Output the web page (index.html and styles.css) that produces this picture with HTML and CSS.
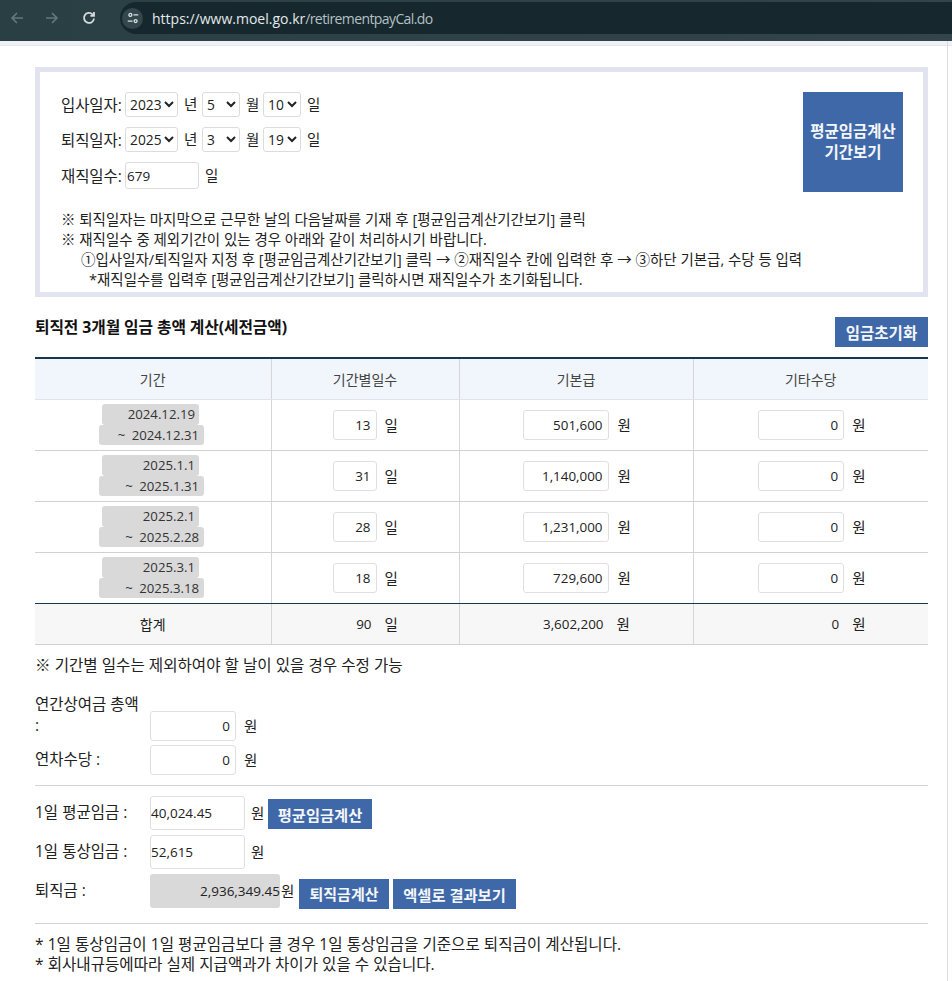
FILE: index.html
```html
<!DOCTYPE html>
<html lang="ko">
<head>
<meta charset="utf-8">
<title>퇴직금 계산</title>
<link rel="stylesheet" href="styles.css">
</head>
<body>
<header class="chrome">
  <svg class="nav dim" viewBox="0 0 16 16"><path d="M14 8H3M8 3 3 8l5 5"/></svg>
  <svg class="nav dim" viewBox="0 0 16 16"><path d="M2 8h11M8 3l5 5-5 5"/></svg>
  <svg class="nav reload" viewBox="0 0 16 16"><path d="M13 8.500A5 5 0 1 1 11.500 4.300L13 5.800M13 2v3.800H9.400"/></svg>
  <div class="omni">
    <span class="tune"><svg viewBox="0 0 16 16"><circle cx="5" cy="4.500" r="1.700"/><path d="M8.500 4.500H14M2 11.500h5.500"/><circle cx="11" cy="11.500" r="1.700"/></svg></span>
    <span class="url"><span class="host">https://www.moel.go.kr</span><span class="path">/retirementpayCal.do</span></span>
  </div>
</header>
<div class="strip"></div>
<main class="page">
  <section class="box">
    <div class="box-top">
      <div class="dates">
        <div class="date-row">
          <label class="date-label">입사일자:</label>
          <select class="sel sel-y"><option>2023</option></select><span class="u">년</span>
          <select class="sel sel-m"><option>5</option></select><span class="u">월</span>
          <select class="sel sel-d"><option>10</option></select><span class="u">일</span>
        </div>
        <div class="date-row">
          <label class="date-label">퇴직일자:</label>
          <select class="sel sel-y"><option>2025</option></select><span class="u">년</span>
          <select class="sel sel-m"><option>3</option></select><span class="u">월</span>
          <select class="sel sel-d"><option>19</option></select><span class="u">일</span>
        </div>
        <div class="date-row days-row">
          <label class="date-label">재직일수:</label>
          <input class="days" value="679"><span class="u u-days">일</span>
        </div>
      </div>
      <button class="btn btn-period">평균임금계산<br>기간보기</button>
    </div>
    <div class="notes">
      <p>※ 퇴직일자는 마지막으로 근무한 날의 다음날짜를 기재 후 [평균임금계산기간보기] 클릭</p>
      <p>※ 재직일수 중 제외기간이 있는 경우 아래와 같이 처리하시기 바랍니다.</p>
      <p class="ind1">①입사일자/퇴직일자 지정 후 [평균임금계산기간보기] 클릭 → ②재직일수 칸에 입력한 후 → ③하단 기본급, 수당 등 입력</p>
      <p class="ind2">*재직일수를 입력후 [평균임금계산기간보기] 클릭하시면 재직일수가 초기화됩니다.</p>
    </div>
  </section>

  <div class="title-row">
    <h2 class="title">퇴직전 3개월 임금 총액 계산(세전금액)</h2>
    <button class="btn btn-reset">임금초기화</button>
  </div>

  <table class="pay">
    <colgroup><col class="c1"><col class="c2"><col class="c3"><col class="c4"></colgroup>
    <thead><tr><th>기간</th><th>기간별일수</th><th>기본급</th><th>기타수당</th></tr></thead>
    <tbody>
      <tr>
        <td><div class="period"><span class="chip c-a">2024.12.19</span><span class="chip c-b">~ 2024.12.31</span></div></td>
        <td><input class="in in-d" value="13"><span class="u2">일</span></td>
        <td><input class="in in-w" value="501,600"><span class="u2">원</span></td>
        <td><input class="in in-w" value="0"><span class="u2">원</span></td>
      </tr>
      <tr>
        <td><div class="period"><span class="chip c-a">2025.1.1</span><span class="chip c-b">~ 2025.1.31</span></div></td>
        <td><input class="in in-d" value="31"><span class="u2">일</span></td>
        <td><input class="in in-w" value="1,140,000"><span class="u2">원</span></td>
        <td><input class="in in-w" value="0"><span class="u2">원</span></td>
      </tr>
      <tr>
        <td><div class="period"><span class="chip c-a">2025.2.1</span><span class="chip c-b">~ 2025.2.28</span></div></td>
        <td><input class="in in-d" value="28"><span class="u2">일</span></td>
        <td><input class="in in-w" value="1,231,000"><span class="u2">원</span></td>
        <td><input class="in in-w" value="0"><span class="u2">원</span></td>
      </tr>
      <tr>
        <td><div class="period"><span class="chip c-a">2025.3.1</span><span class="chip c-b">~ 2025.3.18</span></div></td>
        <td><input class="in in-d" value="18"><span class="u2">일</span></td>
        <td><input class="in in-w" value="729,600"><span class="u2">원</span></td>
        <td><input class="in in-w" value="0"><span class="u2">원</span></td>
      </tr>
    </tbody>
    <tfoot>
      <tr>
        <td class="sum-label">합계</td>
        <td><span class="sum sum-d">90</span><span class="u2">일</span></td>
        <td><span class="sum sum-w">3,602,200</span><span class="u2">원</span></td>
        <td><span class="sum sum-e">0</span><span class="u2">원</span></td>
      </tr>
    </tfoot>
  </table>

  <p class="tbl-note">※ 기간별 일수는 제외하여야 할 날이 있을 경우 수정 가능</p>

  <div class="extras">
    <div class="row row-bonus"><label class="lab">연간상여금 총액 :</label><input class="in in-w" value="0"><span class="u2">원</span></div>
    <div class="row row-leave"><label class="lab">연차수당 :</label><input class="in in-w" value="0"><span class="u2">원</span></div>
  </div>
  <hr class="rule rule-a">
  <div class="results">
    <div class="row row-avg"><label class="lab">1일 평균임금 :</label><input class="in in-r" value="40,024.45"><span class="u3">원</span><button class="btn btn-avg">평균임금계산</button></div>
    <div class="row row-ord"><label class="lab">1일 통상임금 :</label><input class="in in-r" value="52,615"><span class="u3">원</span></div>
    <div class="row row-total"><label class="lab">퇴직금 :</label><input class="in-total" value="2,936,349.45" readonly><span class="u4">원</span><button class="btn btn-calc">퇴직금계산</button><button class="btn btn-xls">엑셀로 결과보기</button></div>
  </div>
  <hr class="rule rule-b">
  <div class="foot">
    <p>* 1일 통상임금이 1일 평균임금보다 클 경우 1일 통상임금을 기준으로 퇴직금이 계산됩니다.</p>
    <p>* 회사내규등에따라 실제 지급액과가 차이가 있을 수 있습니다.</p>
  </div>
</main>
<div class="scroll-line"></div>
</body>
</html>
```
FILE: styles.css
```css
* { box-sizing: border-box; }
html, body { margin: 0; padding: 0; background: #fff; }
body {
  font-family: "Open Sans", "Noto Sans CJK KR", sans-serif;
  font-size: 15.5px;
  color: #222;
  width: 952px;
  height: 981px;
  overflow: hidden;
  position: relative;
}
p { margin: 0; }
input, select, button { font-family: inherit; color: #222; }

.chrome {
  height: 41px;
  display: flex;
  align-items: flex-start;
  background: linear-gradient(90deg, #2a3f44 0, #33444a 100%);
  padding-left: 9px;
  gap: 19px;
}
.nav { width: 16px; height: 16px; flex: none; margin-top: 10px; fill: none; stroke: #5f7a7f; stroke-width: 1.6; }
.nav.reload { stroke: #d5dcdf; margin-left: 2px; stroke-width: 1.8; }
.omni {
  flex: 1;
  height: 32px;
  margin: 2px 0 0 4px;
  background: #16282e;
  border-radius: 16px 0 0 16px;
  display: flex;
  align-items: center;
  padding-left: 2px;
  gap: 9px;
}
.tune {
  width: 21px; height: 21px; border-radius: 50%;
  background: #33474c;
  display: flex; align-items: center; justify-content: center;
}
.tune svg { width: 14px; height: 14px; fill: none; stroke: #d9e0e2; stroke-width: 1.5; }
.url { font-size: 14px; white-space: nowrap; }
.host { color: #e4e9ea; }
.path { color: #b4c0c3; letter-spacing: -0.6px; }
.strip { height: 5px; background: #eef1f6; border-bottom: 1px solid #e3e6ea; }

.page { width: 928px; padding: 21px 0 0 35px; }

.box {
  height: 230px;
  border: 5px solid #e1e4ee;
  padding: 20px 20px 0 21px;
}
.box-top { display: flex; justify-content: space-between; height: 118px; }
.date-row { display: flex; align-items: center; height: 25px; margin-bottom: 10px; line-height: 26px; }
.days-row { height: 27px; margin: 0; }
.date-label { width: 64px; font-size: 15.5px; white-space: nowrap; letter-spacing: -0.1px; }
.sel {
  height: 25px;
  background: #fff;
  border: 1px solid #dcdcdc;
  border-radius: 3px;
  font-size: 13.8px;
  padding: 0;
}
.sel-y { width: 53px; }
.sel-m { width: 38px; }
.sel-d { width: 38px; }
.u { margin: 0 6px; width: 12px; text-align: center; font-size: 14.5px; }
.sel-m + .u { margin-right: 5px; }
.days {
  width: 74px; height: 27px;
  border: 1px solid #dcdcdc; border-radius: 3px;
  font-size: 13.5px; padding: 0 1px; outline: 0;
}
.u-days { margin-left: 6px; }
.btn {
  background: #3f68a8;
  color: #f4f6fa;
  border: 0;
  padding: 0;
  font-weight: 700;
  font-size: 15.5px;
  cursor: pointer;
  white-space: nowrap;
}
.btn-period { width: 100px; height: 100px; line-height: 21px; }
.notes { line-height: 20px; font-size: 14.5px; color: #222; white-space: nowrap; }
.ind1 { padding-left: 20px; }
.ind2 { padding-left: 28px; }

.title-row { display: flex; justify-content: space-between; align-items: flex-start; margin-top: 20px; height: 40px; }
.title { margin: 0; font-size: 15.8px; font-weight: 700; line-height: 20px; color: #111; letter-spacing: -0.1px; }
.btn-reset { width: 93px; height: 30px; }

.pay { width: 893px; border-collapse: collapse; table-layout: fixed; border-top: 2px solid #16384f; font-size: 13.4px; }
.c1 { width: 236px; } .c2 { width: 188px; } .c3 { width: 234px; } .c4 { width: 235px; }
.pay th, .pay td { padding: 0; text-align: center; border-left: 1px solid #d4d6d9; border-bottom: 1px solid #cfd1d4; }
.pay th:first-child, .pay td:first-child { border-left: 0; }
.pay th { height: 41px; background: #f1f6fc; font-weight: 400; font-size: 14px; color: #444; border-bottom-color: #e0e4ea; }
.pay tbody td { height: 51px; }
.pay tbody tr:last-child td { border-bottom: 1px solid #16384f; }
.pay tfoot td { height: 41px; background: #f7f7f7; }
.pay td:last-child { padding-left: 2px; }
.pay .sum-label { font-size: 14px; }
.period { width: 105px; margin-left: 64px; display: flex; flex-direction: column; }
.chip { display: block; background: #d9d9d9; border-radius: 3px; text-align: right; font-size: 13.2px; line-height: 20.5px; height: 20.5px; color: #333; padding-right: 5px; white-space: nowrap; word-spacing: 3px; }
.c-a { width: 97px; margin-left: 3px; padding-right: 4px; }
.in {
  height: 30px;
  border: 1px solid #dfdfdf;
  border-radius: 3px;
  background: #fff;
  text-align: right;
  font-size: 13.4px;
  padding: 0 5px 0 4px;
  outline: 0;
  vertical-align: middle;
}
.in-d { width: 44px; }
.in-w { width: 86px; }
.u2 { display: inline-block; margin-left: 8px; vertical-align: middle; font-size: 14.5px; }
td .u2 { width: 13px; }
td .in-w + .u2 { margin-left: 9px; width: 12px; }
td:last-child .in-w + .u2 { margin-left: 8px; width: 13px; }
.sum { display: inline-block; text-align: right; vertical-align: middle; padding-right: 5px; }
.sum-d { width: 44px; }
.sum-w { width: 86px; }
.sum-e { width: 86px; }
td:last-child .sum + .u2 { margin-left: 8px; width: 13px; }

.tbl-note { margin-top: 10px; line-height: 20px; height: 20px; font-size: 15.6px; white-space: nowrap; }
.extras { margin-top: 19px; }
.row { display: flex; align-items: center; }
.lab { width: 115px; flex: none; line-height: 21px; }
.row-bonus { height: 46px; align-items: flex-start; }
.row-bonus .lab { width: 110px; margin-right: 5px; }
.row-bonus .in { margin-top: 17px; }
.row-bonus .u2 { margin-top: 21px; }
.row-leave { margin-top: 5px; height: 30px; }
.rule { height: 1px; border: 0; background: #d3d3d3; margin: 0; width: 893px; }
.rule-a { margin-top: 10px; }
.results { margin-top: 10px; }
.in-r { width: 95px; height: 34px; text-align: left; padding: 0; font-size: 13.5px; }
.u3 { margin-left: 6px; width: 13px; font-size: 14.5px; }
.row-avg { height: 34px; }
.btn-avg { width: 104px; height: 30px; margin: 2px 0 0 4px; font-size: 15.3px; }
.row-ord { height: 34px; margin-top: 5px; }
.row-total { height: 34px; margin-top: 5px; }
.in-total { width: 130px; height: 34px; background: #d9d9d9; border: 0; border-radius: 3px; text-align: right; font-size: 13.5px; padding: 0; outline: 0; }
.u4 { margin-left: 1px; width: 14px; font-size: 14.5px; }
.btn-calc { width: 90px; height: 30px; margin: 6px 0 0 4px; font-size: 15px; }
.btn-xls { width: 123px; height: 30px; margin: 6px 0 0 4px; font-size: 15.3px; }
.rule-b { margin-top: 15px; }
.foot { margin-top: 10px; line-height: 20px; font-size: 15.6px; white-space: nowrap; }
.scroll-line { position: absolute; top: 41px; right: 4px; width: 1px; bottom: 0; background: #dcdcdc; }
```
